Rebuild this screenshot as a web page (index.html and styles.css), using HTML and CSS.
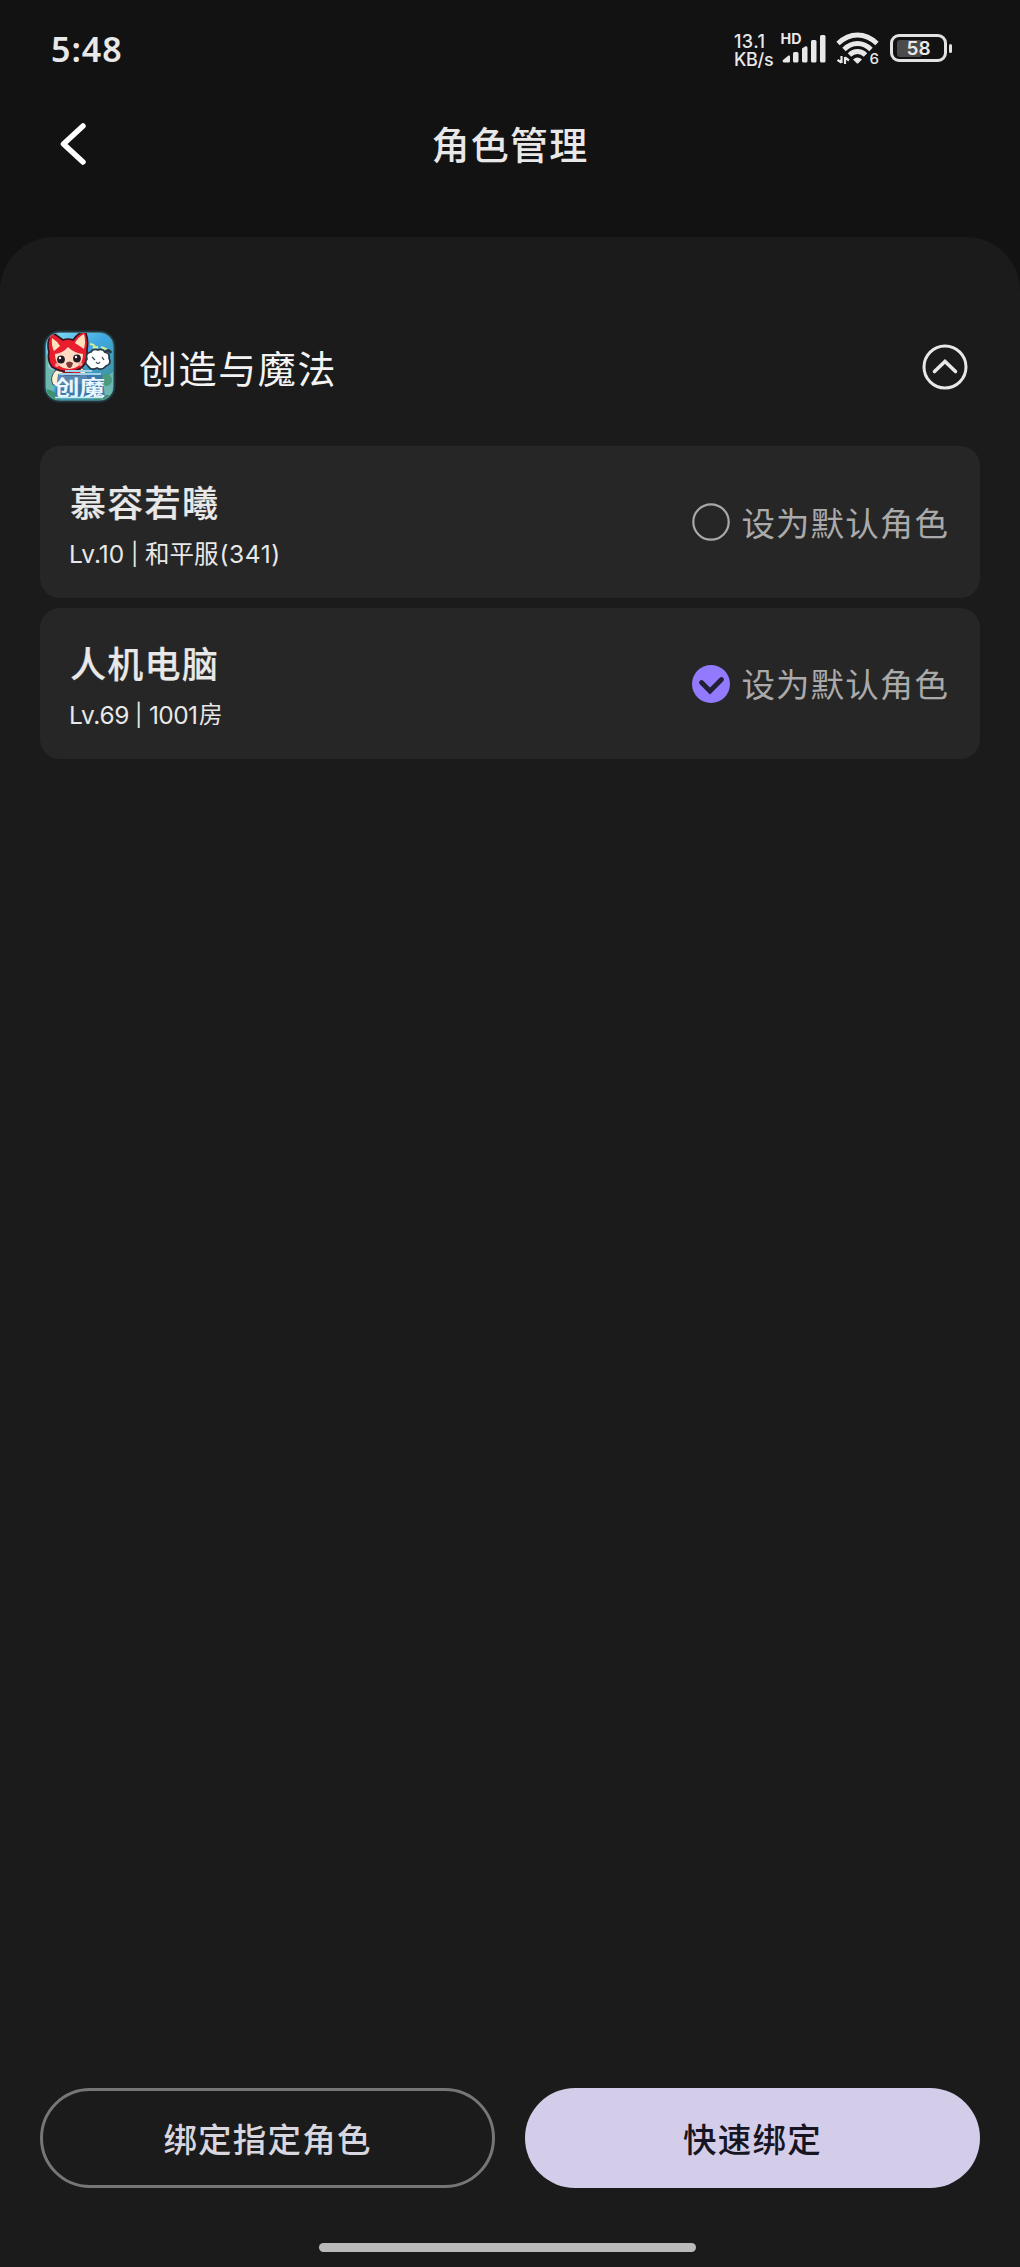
FILE: index.html
```html
<!DOCTYPE html>
<html lang="zh-CN">
<head>
<meta charset="utf-8">
<title>角色管理</title>
<link rel="stylesheet" href="styles.css">
</head>
<body>
<div class="screen">
  <div class="statusbar">
    <span class="clock">5:48</span>
    <div class="status-icons">
      <div class="net-speed"><span class="speed-value">13.1</span><span class="speed-unit">KB/s</span></div>
      <svg class="signal" width="46" height="32" viewBox="0 0 46 32">
        <text class="hd" x="-1.5" y="11" textLength="21" lengthAdjust="spacingAndGlyphs">HD</text>
        <g fill="#e8e8e8">
          <path d="M2 29.500a1.500 1.500 0 0 1-1-2.500l5.500-4.500q1.500-.5 1.500 1v4.500q0 1.500-1.500 1.500z"/>
          <rect x="11" y="19" width="5.500" height="10.500" rx="1.500"/>
          <path d="M20 15.500l3-2q2.500-1 2.500 1.500v13q0 1.500-1.500 1.500h-2.500q-1.500 0-1.500-1.500z"/>
          <rect x="29" y="7" width="5.500" height="22.500" rx="1.500"/>
          <rect x="38" y="2" width="5.500" height="27.500" rx="1.500"/>
        </g>
      </svg>
      <svg class="wifi" width="44" height="36" viewBox="0 0 44 36">
        <g fill="none" stroke="#e8e8e8" stroke-width="4.800">
          <path d="M2 11.500Q11 3 21.500 3T41 11.500"/>
          <path d="M8 17.500Q14 11.500 21.500 11.500T35 17.500"/>
          <path d="M13.500 23Q17 19.500 21.500 19.500T29.500 23"/>
        </g>
        <path fill="#e8e8e8" d="M17 27.500q4.500-4 9 0l-3.500 3.500q-1 1-2 0z"/>
        <path fill="none" stroke="#e8e8e8" stroke-width="2.200" d="M5.500 24v7M5.500 30.500L1.500 28M9 32v-7M9 25.500l4 3"/>
        <text class="wifi-gen" x="33.500" y="32">6</text>
      </svg>
      <div class="battery"><div class="battery-body"><span class="battery-level"></span><span class="battery-text">58</span></div><span class="battery-tip"></span></div>
    </div>
  </div>

  <header class="header">
    <svg class="back" width="28" height="44" viewBox="0 0 28 44"><path d="M23 4L3.500 22L23 40" fill="none" stroke="#fff" stroke-width="5.500" stroke-linecap="round" stroke-linejoin="round"/></svg>
    <h1 class="title">角色管理</h1>
  </header>

  <main class="panel">
    <div class="game">
      <svg class="game-icon" width="76" height="76" viewBox="0 0 76 76">
        <defs>
          <linearGradient id="sky" x1="0" y1="0" x2=".7" y2="1"><stop offset="0" stop-color="#86e2f4"/><stop offset=".45" stop-color="#3fa8e0"/><stop offset="1" stop-color="#3f8f93"/></linearGradient>
          <clipPath id="tile"><rect x="5" y="4" width="67" height="67" rx="13"/></clipPath>
        </defs>
        <rect x="2.500" y="1.500" width="72" height="72" rx="16" fill="#20383e"/>
        <g clip-path="url(#tile)">
          <rect x="4" y="3" width="70" height="70" fill="url(#sky)"/>
          <path d="M5 26q8 10 10 22l-4 24H5zM72 43q-10 5-11 28h11z" fill="#6cb8b0"/>
          <circle cx="65" cy="51" r="6" fill="#4a9a80"/><circle cx="12" cy="36" r="5" fill="#94cad0"/>
          <path d="M5 60q10 1 15 12H5zM52 72l8-6h12v7z" fill="#3f8f72"/>
          <path d="M49 15q7 1 3 4l5-1M60 18l7 3" stroke="#d5ed9a" stroke-width="2" fill="none"/>
          <path d="M15 41Q8 48 12 56h36q-1-14-8-18z" fill="#fff2d3" stroke="#3f4b57"/>
          <path d="M20 40l20-1-1 8H23z" fill="#d81e2b"/>
          <path d="M8 9Q8 1 15 6l7 5q5-2 10 0Q38 3 44 2q4 8 2 19 1 13-6 18-14 8-29-1-5-7-3-15Q6 17 8 9z" fill="#e91d2e" stroke="#36121d" stroke-width="1.600"/>
          <path d="M11 9q5 3 8 8l-6 5q-3-6-2-13zM43 5q-6 3-9 9l9 6q2-7 0-15z" fill="#ffe1bc"/>
          <path d="M14 25q8-1 13-7 6 6 15 7 0 14-14 15-14-1-14-15z" fill="#ffdcc3"/>
          <circle cx="20" cy="30.500" r="3.900" fill="#241a22"/><circle cx="36" cy="29.500" r="3.900" fill="#241a22"/>
          <circle cx="19" cy="29" r="1.200" fill="#fff"/><circle cx="35" cy="28" r="1.200" fill="#fff"/>
          <circle cx="16" cy="36" r="2" fill="#f1a096"/><circle cx="39.500" cy="35" r="2" fill="#f1a096"/>
          <path d="M25 34q3.500-3 7 0-1 5-3.500 5T25 34z" fill="#7b3c3b"/>
          <path d="M46 30q-2-6 4-7 2-4 7-2 4-2 7 2 5 1 4 6 3 6-3 8-4 5-9 2-6 3-9-2-4-3-1-7z" fill="#fff" stroke="#27384b" stroke-width="1.700"/>
          <path d="M64 24q3-5 6 0" fill="none" stroke="#263b3e" stroke-width="3"/>
          <path d="M51 28l3 3M61 28l2 3M55 33q2 3 4 0" stroke="#354059" stroke-width="1.300" fill="none"/>
          <path d="M17 45h44l3 23H14z" fill="#3a73ab" fill-opacity=".85"/>
          <path d="M18 45h42M24 42h27" stroke="#9fd0ea" stroke-width="2"/>
          <text class="game-logo" x="13" y="66" textLength="51" lengthAdjust="spacingAndGlyphs">创魔</text>
          <path d="M14 68.500h48" stroke="#c4edf2" stroke-width="1.600"/>
        </g>
        <rect x="4.500" y="3.500" width="68" height="68" rx="14" fill="none" stroke="#78c4d8" stroke-opacity=".45"/>
      </svg>
      <span class="game-name">创造与魔法</span>
      <svg class="collapse" width="48" height="48" viewBox="0 0 48 48" fill="none" stroke="#e8e8e8"><circle cx="24" cy="24" r="21" stroke-width="3"/><path d="M13.500 28.500L24 18.500L34.500 28.500" stroke-width="3.600" stroke-linecap="round" stroke-linejoin="miter"/></svg>
    </div>

    <div class="roles">
      <section class="role">
        <div class="role-info">
          <div class="role-name">慕容若曦</div>
          <div class="role-meta"><span class="lv10">Lv.10</span><span class="bar">|</span><span class="server">和平服</span><span class="server-no">(341)</span></div>
        </div>
        <div class="option">
          <svg width="40" height="40" viewBox="0 0 40 40"><circle cx="20" cy="20" r="17.700" fill="none" stroke="#a9a9a9" stroke-width="2.200"/></svg>
          <span>设为默认角色</span>
        </div>
      </section>
      <section class="role">
        <div class="role-info">
          <div class="role-name">人机电脑</div>
          <div class="role-meta"><span class="lv69">Lv.69</span><span class="bar">|</span><span class="room-no">1001</span><span class="room">房</span></div>
        </div>
        <div class="option">
          <svg width="40" height="40" viewBox="0 0 40 40"><circle cx="20" cy="20" r="19" fill="#9379fb"/><path d="M10.500 18.500L19 27L30.500 15.500" fill="none" stroke="#222034" stroke-width="4.800" stroke-linecap="round"/></svg>
          <span>设为默认角色</span>
        </div>
      </section>
    </div>

    <div class="actions">
      <button class="btn btn-outline">绑定指定角色</button>
      <button class="btn btn-fill">快速绑定</button>
    </div>
    <div class="home-indicator"></div>
  </main>
</div>
</body>
</html>
```

FILE: styles.css
```css
* { box-sizing: border-box; }
body { margin: 0; background: #121212; }
.screen {
  display: flex;
  flex-direction: column;
  width: 1020px;
  height: 2267px;
  background: #121212;
  color: #e8e8e8;
  font-family: Inter, "Noto Sans CJK SC", sans-serif;
}
.statusbar {
  display: flex;
  justify-content: space-between;
  height: 98px;
  padding: 0 68px 0 51px;
}
.clock { margin-top: 29px; font: 600 34px/40px "Noto Sans", sans-serif; letter-spacing: 1px; }
.status-icons { display: flex; align-items: flex-start; }
.net-speed {
  display: flex;
  flex-direction: column;
  width: 48px;
  margin-top: 33px;
  font-size: 18px;
  font-weight: 500;
  line-height: 17.500px;
}
.speed-value { letter-spacing: .4px; }
.speed-unit { letter-spacing: -.3px; }
.signal { margin-top: 33px; overflow: visible; }
.hd { font: 700 14px Inter, sans-serif; fill: #e8e8e8; }
.wifi { margin: 32px 0 0 8px; overflow: visible; }
.wifi-gen { font: 500 15px Inter, sans-serif; fill: #e8e8e8; }
.battery { display: flex; align-items: center; gap: 2px; margin: 34px 0 0 10px; }
.battery-body {
  display: grid;
  width: 57px;
  height: 28px;
  border: 3px solid #e2e2e2;
  border-radius: 9px;
}
.battery-level, .battery-text { grid-area: 1 / 1; }
.battery-level { width: 25px; margin: 3px 0 3px 4px; border-radius: 3px; background: #4b4b4b; }
.battery-text { z-index: 1; font-size: 19px; font-weight: 600; line-height: 23px; text-align: center; }
.battery-tip { width: 3px; height: 9px; border-radius: 2px; background: #e2e2e2; }

.header {
  display: grid;
  grid-template-columns: 60px 1fr 60px;
  align-items: center;
  height: 92px;
  margin-bottom: 47px;
  padding: 0 58px 0 60px;
}
.title {
  margin: 0 2px 2px 0;
  text-align: center;
  font: 500 38px/50px "Noto Sans CJK SC", sans-serif;
  letter-spacing: 1.300px;
}

.panel {
  display: flex;
  flex: 1;
  flex-direction: column;
  padding: 92px 40px 15px;
  border-radius: 54px 54px 0 0;
  background: #1b1b1b;
}
.game { display: flex; align-items: center; height: 76px; }
.game-icon { margin-left: 1px; }
.game-name {
  margin: 0 0 1px 22px;
  font: 400 38px/50px "Noto Sans CJK SC", sans-serif;
  letter-spacing: 1.600px;
  color: #f4f4f4;
}
.collapse { margin: 0 11px 0 auto; }
.game-logo { font: 700 21px "Noto Sans CJK SC", sans-serif; fill: #e9f5ff; }

.roles { display: flex; flex-direction: column; gap: 10px; margin-top: 41px; }
.role {
  display: flex;
  align-items: center;
  justify-content: space-between;
  height: 151.500px;
  padding: 0 31px 0 30px;
  border-radius: 20px;
  background: #262626;
}
.role-name {
  font: 500 36px/50px "Noto Sans CJK SC", sans-serif;
  letter-spacing: 1.300px;
  -webkit-text-stroke: .2px currentColor;
}
.role-meta {
  display: flex;
  align-items: center;
  height: 34px;
  margin: 11px 0 -3px -1px;
  font-size: 24.500px;
  line-height: 34px;
  white-space: nowrap;
}
.lv10 { width: 61px; }
.lv69 { width: 65px; letter-spacing: -.3px; }
.bar { width: 15px; font-size: 22px; line-height: 30px; text-indent: 1px; }
.server-no { margin-left: 1px; letter-spacing: .6px; }
.room-no { width: 50px; letter-spacing: -.6px; }
.room { font-size: 23.500px; }
.option {
  display: flex;
  align-items: center;
  gap: 10px;
  color: #aaa;
  font: 400 33.500px/50px "Noto Sans CJK SC", sans-serif;
  letter-spacing: 1.100px;
}
.option svg { margin-top: 1px; }

.actions { display: grid; grid-template-columns: 1fr 1fr; gap: 30px; margin-top: auto; }
.btn {
  height: 100px;
  padding: 0;
  border: 0;
  border-radius: 50px;
  font: 500 33.500px/50px "Noto Sans CJK SC", sans-serif;
  letter-spacing: 1.200px;
}
.btn-outline { border: 3px solid #767676; background: transparent; color: #d8d6df; }
.btn-fill { background: #d3cdea; color: #171522; }
.home-indicator {
  width: 377px;
  height: 9px;
  margin: 55px 0 0 279px;
  border-radius: 5px;
  background: #bababa;
}
```
